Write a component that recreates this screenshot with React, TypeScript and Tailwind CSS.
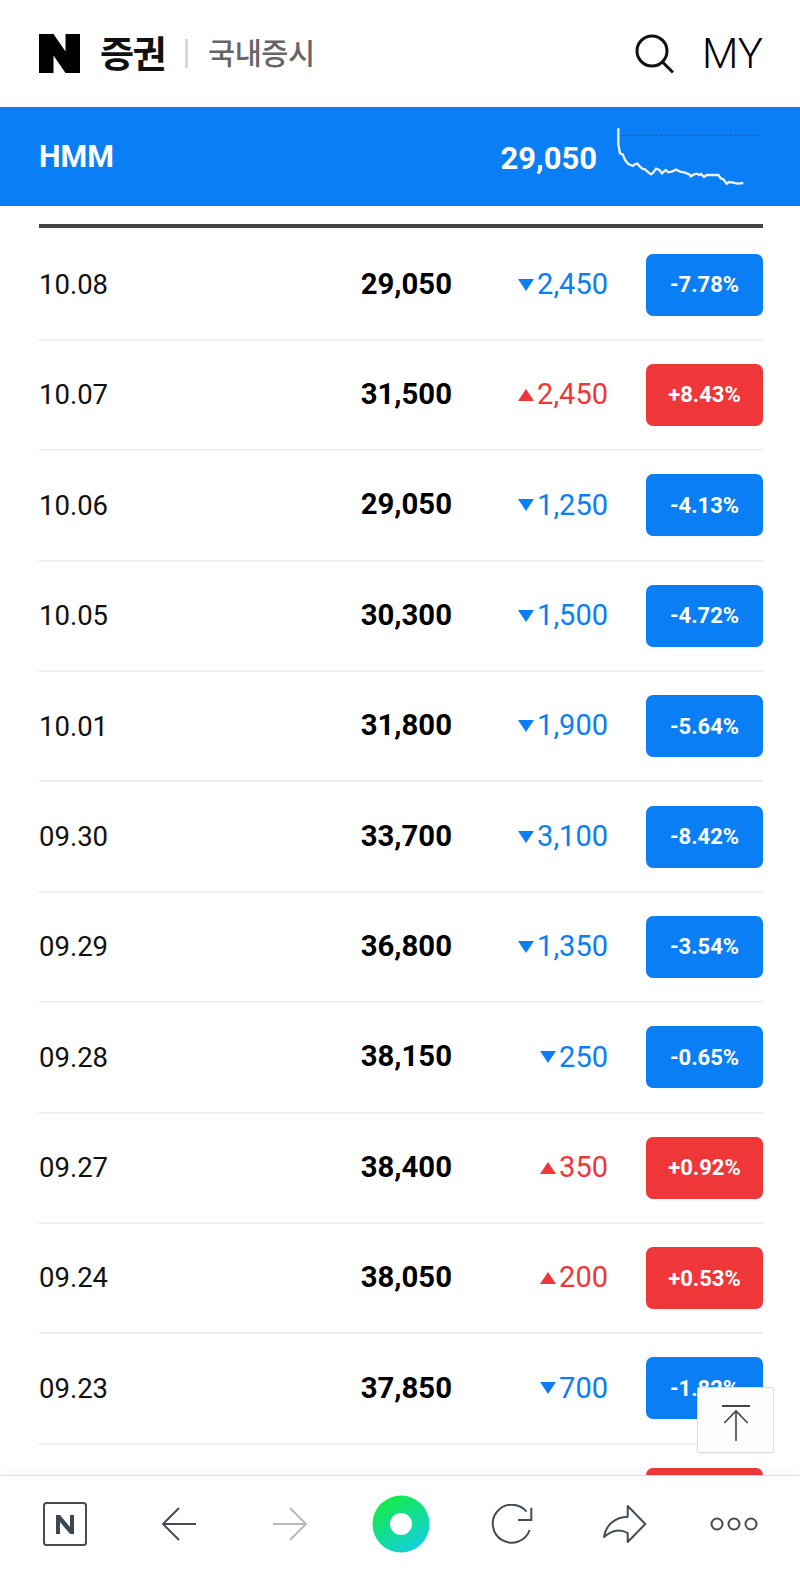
const rows = [
  { date: "10.08", price: "29,050", diff: "2,450", rate: "-7.78%", up: false },
  { date: "10.07", price: "31,500", diff: "2,450", rate: "+8.43%", up: true },
  { date: "10.06", price: "29,050", diff: "1,250", rate: "-4.13%", up: false },
  { date: "10.05", price: "30,300", diff: "1,500", rate: "-4.72%", up: false },
  { date: "10.01", price: "31,800", diff: "1,900", rate: "-5.64%", up: false },
  { date: "09.30", price: "33,700", diff: "3,100", rate: "-8.42%", up: false },
  { date: "09.29", price: "36,800", diff: "1,350", rate: "-3.54%", up: false },
  { date: "09.28", price: "38,150", diff: "250", rate: "-0.65%", up: false },
  { date: "09.27", price: "38,400", diff: "350", rate: "+0.92%", up: true },
  { date: "09.24", price: "38,050", diff: "200", rate: "+0.53%", up: true },
  { date: "09.23", price: "37,850", diff: "700", rate: "-1.82%", up: false },
];

const sparkline =
  "55,40 55,90 60,115 68,118 75,135 85,147 92,150 98,153 105,148 112,146 120,155 128,162 135,163 145,172 153,178 160,172 168,161 178,165 186,175 197,165 205,172 215,170 228,164 240,170 255,173 268,178 272,184 280,179 290,176 298,180 303,177 312,186 320,180 335,180 355,180 362,190 370,193 380,206 388,201 400,203 412,206 430,204";

function Row({ date, price, diff, rate, up }: (typeof rows)[number]) {
  return (
    <div className="flex h-[110.4px] shrink-0 items-center border-b-2 border-[#f0f0f0]">
      <div className="w-[200px] text-[27.5px] text-[#111]">{date}</div>
      <div className="w-[213px] text-right text-[29.3px] font-bold text-black">{price}</div>
      <div className={`flex w-[156px] items-center justify-end text-[29px] ${up ? "text-[#ef373a]" : "text-[#0a7ef5]"}`}>
        <svg viewBox="0 0 16 12" className="mr-[3px] h-[12px] w-[16px]">
          <polygon points={up ? "8,0 16,12 0,12" : "0,0 16,0 8,12"} fill="currentColor" />
        </svg>
        {diff}
      </div>
      <div
        className={`ml-auto flex h-[62px] w-[117px] items-center justify-center rounded-[7px] text-[22px] font-bold text-white ${
          up ? "bg-[#ef373a]" : "bg-[#0a7ef5]"
        }`}
      >
        {rate}
      </div>
    </div>
  );
}

export default function App() {
  return (
    <div className="relative flex h-[1573px] w-[800px] flex-col overflow-hidden bg-white font-['Roboto',sans-serif]">
      {/* Header */}
      <div className="flex h-[107px] shrink-0 items-center pl-[39px] pr-[37px]">
        <svg viewBox="0 0 41 39" className="h-[39px] w-[41px]">
          <path d="M0 0H14.5L26.5 17.5V0H41V39H26.5L14.5 21.5V39H0Z" fill="#000" />
        </svg>
        <span className="ml-[20px] -mt-[3px] font-['Noto_Sans_CJK_KR',sans-serif] text-[37px] font-bold leading-none tracking-[-1.5px] text-[#111]">증권</span>
        <span className="ml-[20px] h-[29px] w-[3px] bg-[#d8d8d8]" />
        <span className="ml-[20px] -mt-[3px] font-['Noto_Sans_CJK_KR',sans-serif] text-[29.5px] font-medium leading-none tracking-[-0.5px] text-[#666]">국내증시</span>
        <svg viewBox="0 0 40 40" className="ml-auto h-[40px] w-[40px]" fill="none" stroke="#111" strokeWidth="3">
          <circle cx="17" cy="17" r="15" />
          <path d="M27.5 28 L38 38.5" />
        </svg>
        <span className="ml-[27px] text-[42px] font-light leading-none text-black">MY</span>
      </div>

      {/* Stock bar */}
      <div className="flex h-[99px] shrink-0 items-center bg-[#0a7ef5] pl-[39px] text-white">
        <span className="text-[30.5px] font-bold">HMM</span>
        <span className="ml-auto mt-[5px] text-[31px] font-bold">29,050</span>
        <svg viewBox="0 0 510 240" className="ml-[3px] mr-[30px] -mt-[3px] h-[80px] w-[170px]" fill="none">
          <line x1="52" y1="61" x2="485" y2="61" stroke="#3c5c80" strokeWidth="3" strokeDasharray="9 5" />
          <polyline points={sparkline} stroke="#eef2f7" strokeWidth="7" />
        </svg>
      </div>

      {/* Price list */}
      <div className="ml-[39px] mr-[37px] mt-[18px] h-[3.5px] shrink-0 bg-[#444]" />
      <div className="ml-[39px] mr-[37px] mt-[2.9px] flex min-h-0 flex-1 flex-col overflow-hidden">
        {rows.map((row) => (
          <Row key={row.date} {...row} />
        ))}
        <div className="ml-auto mt-[23px] h-[62px] w-[117px] shrink-0 rounded-[7px] bg-[#ef373a]" />
      </div>

      {/* Scroll to top */}
      <div className="absolute left-[697px] top-[1387px] flex h-[66px] w-[77px] items-center justify-center rounded-[2px] border border-[#dcdee2] bg-[#fdfdfd] shadow-[0_1px_2px_rgba(0,0,0,0.06)]">
        <svg viewBox="0 0 28 36" className="mt-[5px] h-[36px] w-[28px]" fill="none" stroke="#3f4650" strokeWidth="1.6">
          <path d="M0 1H28" strokeWidth="2" />
          <path d="M14 36V6M2.3 18L14 6L25.7 18" />
        </svg>
      </div>

      {/* Browser toolbar */}
      <div className="relative grid h-[98px] shrink-0 grid-cols-7 items-center border-t border-[#dedede] bg-white px-[10px] pb-[2px] shadow-[0_-6px_10px_rgba(0,0,0,0.02)]">
        <div className="flex justify-center pr-[2px]">
          <svg viewBox="0 0 44 44" className="h-[44px] w-[44px]" fill="none">
            <rect x="1" y="1" width="42" height="42" rx="2.5" stroke="#454c56" strokeWidth="2" />
            <path d="M13 32V13H17L27 25V13H31V32H27L17 20V32Z" fill="#3d4653" />
          </svg>
        </div>
        <div className="flex justify-center pl-[4px]">
          <svg viewBox="0 0 36 34" className="h-[34px] w-[36px]" fill="none" stroke="#454c56" strokeWidth="2">
            <path d="M35 17H2M18 1L2 17L18 33" />
          </svg>
        </div>
        <div className="flex justify-center pl-[2px]">
          <svg viewBox="0 0 36 34" className="h-[34px] w-[36px]" fill="none" stroke="#b9b9b9" strokeWidth="2">
            <path d="M1 17H34M18 1L34 17L18 33" />
          </svg>
        </div>
        <div className="flex justify-center pl-[2px]">
          <svg viewBox="0 0 58 58" className="h-[58px] w-[58px]">
            <defs>
              <linearGradient id="greenDot" x1="0.2" y1="0" x2="0.8" y2="1">
                <stop offset="0" stopColor="#17ec3f" />
                <stop offset="1" stopColor="#11cfe6" />
              </linearGradient>
            </defs>
            <circle cx="29" cy="29" r="28.5" fill="url(#greenDot)" />
            <circle cx="29" cy="29" r="11" fill="#fff" />
          </svg>
        </div>
        <div className="flex justify-center pl-[2px]">
          <svg viewBox="0 0 42 40" className="h-[40px] w-[42px]" fill="none" stroke="#454c56" strokeWidth="2">
            <path d="M35.5 7.7A19 19 0 1 0 38.7 26" />
            <path d="M40.3 3.7V16H27" />
          </svg>
        </div>
        <div className="flex justify-center pl-[4px]">
          <svg viewBox="0 0 44 38" className="h-[38px] w-[44px]" fill="none" stroke="#454c56" strokeWidth="2" strokeLinejoin="round">
            <path d="M24.7 1L42.3 19L24.7 37V28C14 22 6 28 1 32C3 20 12 12 24.7 11.7Z" />
          </svg>
        </div>
        <div className="flex justify-center">
          <svg viewBox="0 0 48 14" className="h-[14px] w-[48px]" fill="none" stroke="#454c56" strokeWidth="2">
            <circle cx="7" cy="7" r="5.5" />
            <circle cx="24" cy="7" r="5.5" />
            <circle cx="41" cy="7" r="5.5" />
          </svg>
        </div>
      </div>
    </div>
  );
}
